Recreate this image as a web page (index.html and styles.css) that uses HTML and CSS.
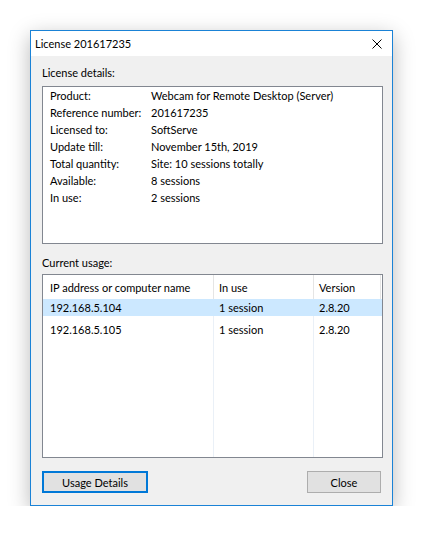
FILE: index.html
```html
<!DOCTYPE html>
<html>
<head>
<meta charset="utf-8">
<link rel="stylesheet" href="styles.css">
</head>
<body>
<div class="window">
  <div class="titlebar">
    <span class="title">License 201617235</span>
    <svg class="close-x" width="10" height="10" viewBox="0 0 10 10"><path d="M0.5 0.5 L9.5 9.5 M9.5 0.5 L0.5 9.5" stroke="#000" stroke-width="1" fill="none"/></svg>
  </div>
  <div class="content">
    <div class="label first">License details:</div>
    <div class="details">
      <div class="k">Product:</div><div class="v">Webcam for Remote Desktop (Server)</div>
      <div class="k">Reference number:</div><div class="v">201617235</div>
      <div class="k">Licensed to:</div><div class="v">SoftServe</div>
      <div class="k">Update till:</div><div class="v">November 15th, 2019</div>
      <div class="k">Total quantity:</div><div class="v">Site: 10 sessions totally</div>
      <div class="k">Available:</div><div class="v">8 sessions</div>
      <div class="k">In use:</div><div class="v">2 sessions</div>
    </div>
    <div class="label second">Current usage:</div>
    <div class="list">
      <div class="row head">
        <div class="c c1">IP address or computer name</div>
        <div class="c c2">In use</div>
        <div class="c c3">Version</div>
        <div class="c c4"></div>
      </div>
      <div class="body">
        <div class="row sel">
          <div class="c c1">192.168.5.104</div>
          <div class="c c2">1 session</div>
          <div class="c c3">2.8.20</div>
          <div class="c c4"></div>
        </div>
        <div class="row gap">
          <div class="c c1"></div>
          <div class="c c2"></div>
          <div class="c c3"></div>
          <div class="c c4"></div>
        </div>
        <div class="row">
          <div class="c c1">192.168.5.105</div>
          <div class="c c2">1 session</div>
          <div class="c c3">2.8.20</div>
          <div class="c c4"></div>
        </div>
        <div class="row fill">
          <div class="c c1"></div>
          <div class="c c2"></div>
          <div class="c c3"></div>
          <div class="c c4"></div>
        </div>
      </div>
    </div>
    <div class="buttons">
      <div class="btn default">Usage Details</div>
      <div class="btn close">Close</div>
    </div>
  </div>
</div>
</body>
</html>
```
FILE: styles.css
```css
html, body {
  margin: 0;
  padding: 0;
  background: #ffffff;
}
body {
  font-family: Lato, "Liberation Sans", Arial, sans-serif;
  font-size: 11px;
  color: #000;
  padding: 30px 0 0 30px;
}
.window {
  width: 361px;
  height: 474px;
  border: 1px solid #1a82d6;
  background: #f0f0f0;
  box-shadow: 0 6px 20px rgba(0, 0, 0, 0.28);
  display: flex;
  flex-direction: column;
}
.titlebar {
  height: 25px;
  background: #fff;
  display: flex;
  align-items: center;
  justify-content: space-between;
  padding: 0 10px 0 4px;
}
.title {
  font-size: 11px;
  line-height: 16px;
}
.close-x {
  display: block;
  margin-top: 1px;
}
.content {
  flex: 1;
  display: flex;
  flex-direction: column;
  padding: 0 10px 0 11px;
}
.label {
  line-height: 16px;
}
.label.first {
  margin-top: 9px;
  margin-bottom: 5px;
}
.label.second {
  margin-top: 11px;
  margin-bottom: 3px;
}
.details {
  background: #fff;
  border: 1px solid #828790;
  display: grid;
  grid-template-columns: 101px 1fr;
  grid-auto-rows: 17px;
  align-content: start;
  padding: 0 0 0 7px;
  box-sizing: content-box;
  width: 332px;
  height: 156px;
  line-height: 17px;
  white-space: nowrap;
}
.list {
  width: 339px;
  height: 182px;
  background: #fff;
  border: 1px solid #828790;
  display: flex;
  flex-direction: column;
}
.row {
  display: flex;
  height: 17px;
  line-height: 17px;
}
.row.gap {
  height: 5px;
}
.row.head {
  height: 24px;
  line-height: 25px;
}
.c {
  box-sizing: border-box;
  white-space: nowrap;
  overflow: hidden;
}
.c1 {
  width: 171px;
  padding-left: 7px;
}
.c2 {
  width: 100px;
  padding-left: 5px;
}
.c3 {
  width: 67px;
  padding-left: 5px;
}
.c4 {
  flex: 1;
}
.head .c1, .head .c2, .head .c3 {
  border-right: 1px solid #e5e5e5;
}
.body {
  flex: 1;
  display: flex;
  flex-direction: column;
}
.body .c1, .body .c2 {
  border-right: 1px solid #eaf0f7;
}
.row.sel {
  background: #cce8ff;
}
.row.sel .c {
  border-right-color: #cce8ff;
}
.row.fill {
  flex: 1;
}
.buttons {
  display: flex;
  justify-content: space-between;
  margin-top: 13px;
  padding-right: 1px;
}
.btn {
  box-sizing: border-box;
  height: 22px;
  background: #e1e1e1;
  display: flex;
  align-items: center;
  justify-content: center;
}
.btn.default {
  width: 106px;
  border: 2px solid #0078d7;
}
.btn.close {
  width: 74px;
  border: 1px solid #adadad;
}
```
